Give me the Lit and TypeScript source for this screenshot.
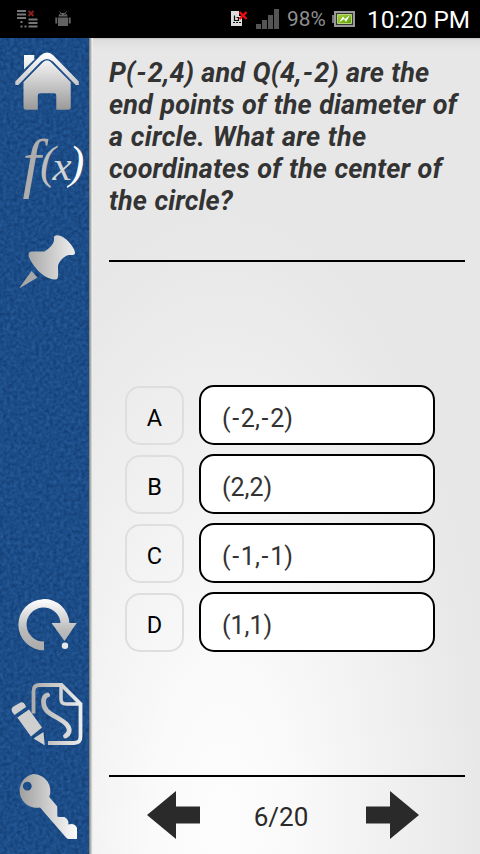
import { LitElement, html, css, svg } from "lit";
import { customElement } from "lit/decorators.js";

@customElement("status-bar")
class StatusBar extends LitElement {
  static styles = css`
    :host { display: flex; height: 38px; background: #000; align-items: center; flex: none; }
    svg { display: block; flex: none; }
    .gap { flex: 1; }
    .pct { width: 45px; box-sizing: border-box; font: 20.800px/41px Roboto, sans-serif; color: #8f8f8f; white-space: nowrap; }
    .clock { width: 125px; padding-left: 12px; box-sizing: border-box; font: 24.300px/41px Roboto, sans-serif; color: #fff; white-space: nowrap; }
  `;
  render() {
    return html`
      <svg width="80" height="38" viewBox="0 0 80 38">
        <g fill="#777"><path d="M17 10h9v2h-9zM17 13.500h9v2h-9zM17 17h9v2h-9zM28.500 18.500h9v2h-9zM28.500 22h9v2h-9zM28.500 25.500h9v2h-9zM20.500 21h2v2h-2zM20.500 25.500h2v2h-2zM24.500 25.500h2v2h-2z"/></g>
        <path d="M28.500 11l5 5M33.500 11l-5 5" stroke="#8b2020" stroke-width="1.800"/>
        <g fill="#626262"><path d="M58.500 16.500c0-5 9-5 9 0zM58 17.500h10v8.500h-10zM55.300 17.500h2v6h-2zM68.700 17.500h2v6h-2z"/><path d="M59.500 11.500l1.500 2M66.500 11.500l-1.500 2" stroke="#626262"/></g>
        <path d="M60.500 14.500h1M64.500 14.500h1" stroke="#000"/>
      </svg>
      <span class="gap"></span>
      <svg width="57" height="38" viewBox="230 0 57 38">
        <path d="M231 11h8v5h3v10h-11z" fill="#ddd"/>
        <path d="M234.500 15.500v5h4v-3h-2M233 22.500h2M236 22.500h2M239 22.500h2" fill="none" stroke="#111" stroke-width="1.200"/>
        <path d="M239.500 12l7 7M246.500 12l-7 7" stroke="#f00d0d" stroke-width="2.400"/>
        <path d="M256 24h5v5h-5zM262 20h5v9h-5zM268 15h5v14h-5zM274 9h5v20h-5z" fill="#555"/>
      </svg>
      <span class="pct">98%</span>
      <svg width="23" height="38" viewBox="332 0 23 38">
        <defs><linearGradient id="bg" x2="1" y2="1"><stop stop-color="#a5d13c"/><stop offset="1" stop-color="#5c9d08"/></linearGradient></defs>
        <path d="M332 15h2v8h-2z" fill="#777"/><path d="M335 12h19v14h-19z" fill="#333" stroke="#999" stroke-width="2"/>
        <path d="M337.500 14.500h14v9h-14z" fill="url(#bg)" stroke="#b9d67a"/>
        <path d="M339 22.500l4-6 2 2.500 5-4-4 7-2-3z" fill="#fff"/>
      </svg>
      <span class="clock">10:20 PM</span>
    `;
  }
}

@customElement("side-rail")
class SideRail extends LitElement {
  static styles = css`
    :host { position: relative; display: flex; flex-direction: column; width: 89px; flex: none; background: #1c4c8a; overflow: hidden; }
    .denim { position: absolute; inset: 0; width: 100%; height: 100%; }
    .icon { position: relative; display: block; flex: none; }
    .space { flex: 1; }
    .fx { display: flex; align-items: baseline; box-sizing: border-box; width: 89px; height: 90px; padding-left: 22.500px; font-family: "Liberation Serif", serif; font-style: italic; line-height: 20px; }
    .fx span { display: block; flex: none; }
    .fx .f { font-size: 66px; line-height: 76px; color: #adadad; }
    .fx .open { font-size: 46px; color: #bdbdbd; margin-left: -.8px; transform: translateY(-7px); }
    .fx .x { font-size: 43px; color: #d4d4d4; margin-left: -3px; transform: translateY(-5.500px); }
    .fx .close { font-size: 46px; color: #fafafa; margin-left: -2.600px; transform: translateY(-7px); }
  `;
  grad(id: string, a: string, b: string) {
    return svg`<linearGradient id=${id} x1="0" y1="0" x2="1" y2="0"><stop stop-color=${a}/><stop offset="1" stop-color=${b}/></linearGradient>`;
  }
  render() {
    return html`
      <svg class="denim">
        <filter id="n" x="0" y="0" width="100%" height="100%" color-interpolation-filters="sRGB">
          <feTurbulence type="fractalNoise" baseFrequency="0.28 0.28" numOctaves="3" seed="4"/>
          <feColorMatrix values="0.1 0 0 0 0.06  0.17 0 0 0 0.215  0.22 0 0 0 0.42  0 0 0 0 1"/>
        </filter>
        <rect width="100%" height="100%" filter="url(#n)"/>
      </svg>
      <svg class="icon" width="89" height="87" viewBox="0 38 89 87">
        <defs><linearGradient id="h" gradientUnits="userSpaceOnUse" x1="0" y1="53" x2="0" y2="110"><stop stop-color="#fff"/><stop offset=".35" stop-color="#ddd"/><stop offset="1" stop-color="#999"/></linearGradient></defs>
        <g fill="url(#h)">
          <path d="M24 55h10.300v4.500l-10.300 10z"/>
          <path d="M23.500 82L43 62q4-3.600 8 0L70.700 82v25q0 2.700-2.700 2.700H56.300V95.500q0-2.200-2.200-2.200H40q-2.200 0-2.200 2.200v14.200H26q-2.500 0-2.500-2.700z"/>
          <path d="M17 84L41.500 59.200q5.500-4.500 11 0L77 84" fill="none" stroke="#1c4c8a" stroke-width="6"/>
          <path d="M15.300 81.500L40.500 55.500q6.500-5.800 13 0L78.800 81.500v3.500h-3L53 61.500q-6-5-12 0L18.300 85h-3z"/>
        </g>
      </svg>
      <div class="icon fx"><span class="f">f</span><span class="open">(</span><span class="x">x</span><span class="close">)</span></div>
      <svg class="icon" width="89" height="90" viewBox="0 215 89 90">
        <defs>${this.grad("p", "#a8a8a8", "#eeeeee")}</defs>
        <path fill="url(#p)" d="M54 237c1-2.800 6-2.300 11 1.500s10 10.500 10 14.500c0 2-2 2-5.500 2-5 0-11 7-11.500 11 0 5 .5 9.500-.5 12.500-1.500 2-7.500 1-13-2.500-8-5-16-17-16-21.500 0-2.500 2-3 5-3h11q9-6 9.500-11z"/>
        <path fill="#a8a8a8" d="M31.500 271l6 6.500L19 288.500z"/>
      </svg>
      <span class="space"></span>
      <svg class="icon" width="89" height="82" viewBox="0 590 89 82">
        <defs><linearGradient id="r" gradientUnits="userSpaceOnUse" x1="0" y1="599" x2="0" y2="651"><stop stop-color="#fff"/><stop offset=".6" stop-color="#bbb"/><stop offset="1" stop-color="#aaa"/></linearGradient></defs>
        <path fill="url(#r)" d="M44 650.300A25.600 25.600 0 1 1 69.500 623H76.700L64.500 641 51.500 623H60.500A17 17 0 1 0 44 641.500z"/>
        <circle cx="65" cy="645.800" r="3.200" fill="#e8e8e8"/>
      </svg>
      <svg class="icon" width="89" height="92" viewBox="0 672 89 92">
        <defs><linearGradient id="s" gradientUnits="userSpaceOnUse" x1="31" y1="0" x2="82" y2="0"><stop stop-color="#aaa"/><stop offset="1" stop-color="#eee"/></linearGradient></defs>
        <g fill="none" stroke="url(#s)" stroke-width="3.800">
          <path d="M33.500 713.500V691q0-6 6-6h22l19 19v32.500q0 6.500-6.500 6.500H48"/>
          <path d="M61 685v14q0 5 5 5h14.500" stroke-width="3.500"/>
          <path d="M47.500 695c-6 2-4.500 12-.5 16 5 5 15 8 20 14 4 5 2 9-1.500 11" stroke-width="4.800" stroke-linecap="round"/>
        </g>
        <g fill="#cfcfcf">
          <path d="M11.500 709.500q0-1.500 2-3l7-4q3-1 4.500 2l1 2.500-11.500 8q-3-2.500-3-5.500zM17.300 717.500L29 709.500 42 727.500 31 736.500zM33.500 738.500L43.500 732l1.200 13.200z"/>
        </g>
      </svg>
      <svg class="icon" width="89" height="90" viewBox="0 764 89 90">
        <defs><linearGradient id="k" gradientUnits="userSpaceOnUse" x1="16" y1="0" x2="78" y2="0"><stop stop-color="#999"/><stop offset="1" stop-color="#fff"/></linearGradient></defs>
        <path fill="url(#k)" fill-rule="evenodd" d="M33.300 774a17 17 0 0 1 16 23l8 9.500v10q1 .5 7 .5 3 1 4 4.500v3l3-.5q4 0 5.700 4v11h-8q-1.500 0-3-1.500L40 807.500a17 17 0 1 1-6.700-33.500zM27.300 781.700a4.400 4.400 0 1 0 .01 0z"/>
      </svg>
    `;
  }
}

@customElement("app-root")
class AppRoot extends LitElement {
  static styles = css`
    :host { display: flex; flex-direction: column; width: 480px; height: 854px; overflow: hidden; font-family: Roboto, sans-serif; }
    .body { display: flex; flex: 1; min-height: 0; }
    .edge { width: 4px; flex: none; background: linear-gradient(90deg, #777, #aaa 35%, #ddd 70%, #f8f8f8); }
    .main { flex: 1; display: flex; flex-direction: column; box-sizing: border-box; padding: 19px 15px 0 16px;
      background: linear-gradient(#c4c4c4, rgba(215,215,215,.6) 2px, rgba(231,231,231,0) 12px), radial-gradient(265px 610px at 130px 790px, #fdfdfd, #fafafa 25%, #e7e7e7 100%); }
    .question { flex: none; height: 205px; box-sizing: border-box; border-bottom: 2px solid #000; color: #333; font-weight: 700; font-style: italic; font-size: 27px; line-height: 32px; white-space: pre; letter-spacing: .13px; word-spacing: .6px; }
    .question .dash { padding: 0 1px; }
    .question .wide { letter-spacing: .3px; }
    .answers { flex: none; padding: 123px 0 0 16px; height: 513px; display: flex; flex-direction: column; gap: 9px; box-sizing: border-box; }
    .row { display: flex; gap: 15px; height: 60px; }
    .letter { width: 59px; box-sizing: border-box; margin-top: 1px; height: 59px; border: 2px solid #dedede; border-radius: 15px; text-align: center; font-size: 23.500px; line-height: 61px; color: #000; }
    .choice { width: 236px; box-sizing: border-box; border: 2px solid #000; border-radius: 15px; background: #fff; color: #333; padding-left: 21px; font-size: 25px; line-height: 63px; }
    .choice .dash { padding: 0 1.700px; }
    .pager { flex: none; box-sizing: border-box; border-top: 2px solid #000; display: flex; align-items: flex-start; height: 79px; padding: 14px 46px 0 38px; justify-content: space-between; color: #2a2a2a; }
    .count { font-size: 26px; line-height: 53px; margin-right: 4px; }
    svg { display: block; }
  `;
  dashed(text: string) {
    return text.split(/(-)/).map((part) => (part === "-" ? html`<span class="dash">-</span>` : part));
  }
  render() {
    const question = ["P(-2,4) and Q(4,-2) are the", "end points of the diameter of", "a circle. What are the", "coordinates of the center of", "the circle?"];
    const answers = [["A", "(-2,-2)"], ["B", "(2,2)"], ["C", "(-1,-1)"], ["D", "(1,1)"]];
    return html`
      <status-bar></status-bar>
      <div class="body">
        <side-rail></side-rail>
        <div class="edge"></div>
        <div class="main">
          <div class="question">${question.map((line, i) => html`<div class=${i === 2 ? "wide" : ""}>${this.dashed(line)}</div>`)}</div>
          <div class="answers">
            ${answers.map(([k, v]) => html`<div class="row"><div class="letter">${k}</div><div class="choice">${this.dashed(v)}</div></div>`)}
          </div>
          <div class="pager">
            <svg width="53" height="48" viewBox="0 0 53 48"><path d="M0 24L29 0v15.500h24v17H29V48z" fill="#2a2a2a"/></svg>
            <span class="count">6/20</span>
            <svg width="53" height="48" viewBox="0 0 53 48"><path d="M53 24L24 0v15.500H0v17h24V48z" fill="#2a2a2a"/></svg>
          </div>
        </div>
      </div>
    `;
  }
}
